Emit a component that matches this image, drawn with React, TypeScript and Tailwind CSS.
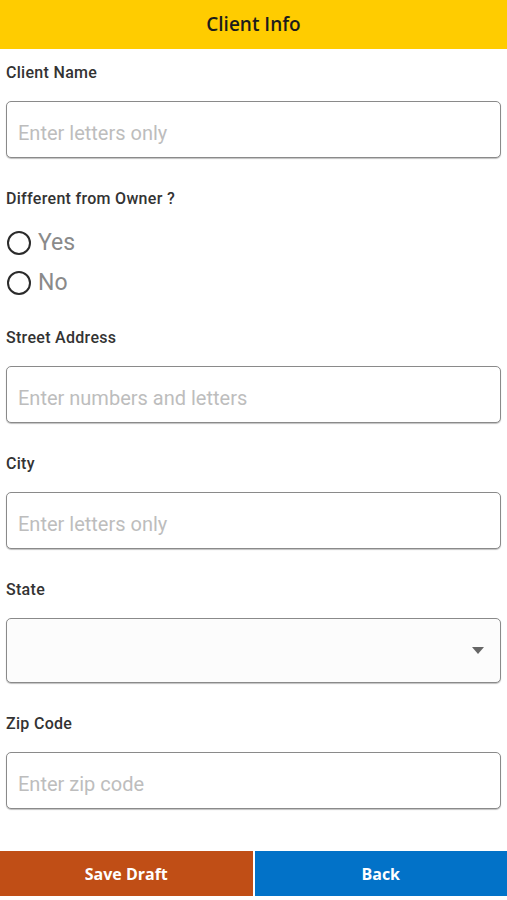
import React from "react";

function FieldLabel({ children }: { children: React.ReactNode }) {
  return (
    <div className="h-5 text-[16px] leading-5 font-medium tracking-[0.3px] text-[#333]">
      {children}
    </div>
  );
}

function TextField({ placeholder }: { placeholder: string }) {
  return (
    <input
      type="text"
      placeholder={placeholder}
      className="mt-[18px] block h-[57px] w-full rounded-[5px] border border-[#8a8a8a] bg-white px-[11px] pt-[6px] text-[20px] text-[#333] shadow-[0_1px_1px_rgba(0,0,0,0.25)] outline-none placeholder:text-[#bdbdbd]"
    />
  );
}

function Radio({ label }: { label: string }) {
  return (
    <label className="flex h-10 items-center gap-[7px]">
      <span className="block h-[24px] w-[24px] rounded-full border-2 border-[#2b2b2b]" />
      <span className="text-[23px] text-[#8a8a8a]">{label}</span>
    </label>
  );
}

export default function App() {
  return (
    <div
      className="flex h-[900px] w-[507px] flex-col bg-white"
      style={{ fontFamily: "Roboto, 'Noto Sans', sans-serif" }}
    >
      <header
        className="flex h-[49px] items-center justify-center bg-[#ffcc00] text-[19px] font-semibold text-[#1c1c1c]"
        style={{ fontFamily: "'Open Sans', sans-serif" }}
      >
        Client Info
      </header>

      <main className="flex flex-1 flex-col pl-[6px] pr-[6px] pt-[14px]">
        <FieldLabel>Client Name</FieldLabel>
        <TextField placeholder="Enter letters only" />

        <div className="mt-[31px]">
          <FieldLabel>Different from Owner ?</FieldLabel>
        </div>
        <div className="mt-[14px] flex flex-col pl-[1px]">
          <Radio label="Yes" />
          <Radio label="No" />
        </div>

        <div className="mt-[25px]">
          <FieldLabel>Street Address</FieldLabel>
        </div>
        <TextField placeholder="Enter numbers and letters" />

        <div className="mt-[31px]">
          <FieldLabel>City</FieldLabel>
        </div>
        <TextField placeholder="Enter letters only" />

        <div className="mt-[31px]">
          <FieldLabel>State</FieldLabel>
        </div>
        <div className="mt-[18px] flex h-[65px] w-full items-center justify-end rounded-[5px] border border-[#8a8a8a] bg-[#fcfcfc] pr-[16px] shadow-[0_1px_1px_rgba(0,0,0,0.25)]">
          <svg width="12" height="7" viewBox="0 0 12 7">
            <path d="M0 0h12L6 7z" fill="#666" />
          </svg>
        </div>

        <div className="mt-[31px]">
          <FieldLabel>Zip Code</FieldLabel>
        </div>
        <TextField placeholder="Enter zip code" />
      </main>

      <footer
        className="mb-[4px] flex h-[45px] gap-[2px] text-[16px] font-bold text-white"
        style={{ fontFamily: "'Open Sans', sans-serif" }}
      >
        <button className="flex-1 bg-[#c04e16]">Save Draft</button>
        <button className="flex-1 bg-[#0272c8]">Back</button>
      </footer>
    </div>
  );
}
